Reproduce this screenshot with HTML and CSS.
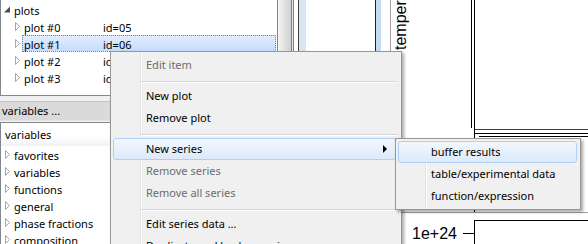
FILE: index.html
```html
<!DOCTYPE html>
<html lang="en">
<head>
    <meta charset="UTF-8">
    <title>Plots</title>
    <link rel="stylesheet" href="styles.css">
</head>
<body>
    <div class="app">
        <div class="left">
            <div class="tree plots">
                <div class="row level0">
                    <svg class="toggle" width="7" height="9"><polygon points="6,1.5 6,7.5 0,7.5" fill="#4d4d4d"/></svg>
                    <div class="cell"><span class="name">plots</span></div>
                </div>
                <div class="row level1">
                    <svg class="toggle" width="7" height="9"><polygon points="1.5,0.5 5.5,4.5 1.5,8.5" fill="#fff" stroke="#a6a6a6"/></svg>
                    <div class="cell"><span class="name">plot #0</span><span>id=05</span></div>
                </div>
                <div class="row level1">
                    <svg class="toggle" width="7" height="9"><polygon points="1.5,0.5 5.5,4.5 1.5,8.5" fill="#fff" stroke="#a6a6a6"/></svg>
                    <div class="cell selected"><span class="name">plot #1</span><span>id=06</span></div>
                </div>
                <div class="row level1">
                    <svg class="toggle" width="7" height="9"><polygon points="1.5,0.5 5.5,4.5 1.5,8.5" fill="#fff" stroke="#a6a6a6"/></svg>
                    <div class="cell"><span class="name">plot #2</span><span>id=07</span></div>
                </div>
                <div class="row level1">
                    <svg class="toggle" width="7" height="9"><polygon points="1.5,0.5 5.5,4.5 1.5,8.5" fill="#fff" stroke="#a6a6a6"/></svg>
                    <div class="cell"><span class="name">plot #3</span><span>id=08</span></div>
                </div>
            </div>

            <div class="dock-title">variables ...</div>

            <div class="tree vars">
                <div class="col-head">variables</div>
                <div class="row level0">
                    <svg class="toggle" width="7" height="9"><polygon points="1.5,0.5 5.5,4.5 1.5,8.5" fill="#fff" stroke="#a6a6a6"/></svg>
                    <div class="cell">favorites</div>
                </div>
                <div class="row level0">
                    <svg class="toggle" width="7" height="9"><polygon points="1.5,0.5 5.5,4.5 1.5,8.5" fill="#fff" stroke="#a6a6a6"/></svg>
                    <div class="cell">variables</div>
                </div>
                <div class="row level0">
                    <svg class="toggle" width="7" height="9"><polygon points="1.5,0.5 5.5,4.5 1.5,8.5" fill="#fff" stroke="#a6a6a6"/></svg>
                    <div class="cell">functions</div>
                </div>
                <div class="row level0">
                    <svg class="toggle" width="7" height="9"><polygon points="1.5,0.5 5.5,4.5 1.5,8.5" fill="#fff" stroke="#a6a6a6"/></svg>
                    <div class="cell">general</div>
                </div>
                <div class="row level0">
                    <svg class="toggle" width="7" height="9"><polygon points="1.5,0.5 5.5,4.5 1.5,8.5" fill="#fff" stroke="#a6a6a6"/></svg>
                    <div class="cell">phase fractions</div>
                </div>
                <div class="row level0">
                    <svg class="toggle" width="7" height="9"><polygon points="1.5,0.5 5.5,4.5 1.5,8.5" fill="#fff" stroke="#a6a6a6"/></svg>
                    <div class="cell">composition</div>
                </div>
            </div>
        </div>

        <div class="strip"></div>

        <svg class="chart" width="197" height="244" viewBox="0 0 197 244">
            <text class="axis-title" transform="translate(15 50) rotate(-90)">temperature [K]</text>
            <line x1="80.5" y1="0" x2="80.5" y2="128" stroke="#000"/>
            <line x1="83.5" y1="0" x2="83.5" y2="212" stroke="#000"/>
            <line x1="83.5" y1="220" x2="83.5" y2="244" stroke="#000"/>
            <line x1="84" y1="129.5" x2="197" y2="129.5" stroke="#e00000"/>
            <line x1="83" y1="133.5" x2="197" y2="133.5" stroke="#000"/>
            <line x1="88" y1="136.5" x2="197" y2="136.5" stroke="#000"/>
            <line x1="9" y1="212.5" x2="197" y2="212.5" stroke="#a0a0a0"/>
            <line x1="9.5" y1="212" x2="9.5" y2="244" stroke="#a0a0a0"/>
            <line x1="83" y1="220.5" x2="197" y2="220.5" stroke="#000"/>
            <line x1="72" y1="233.5" x2="83" y2="233.5" stroke="#000"/>
            <text class="tick-label" x="21" y="239">1e+24</text>
        </svg>

        <div class="menu main-menu">
            <div class="item disabled">Edit item</div>
            <div class="sep"></div>
            <div class="item">New plot</div>
            <div class="item">Remove plot</div>
            <div class="sep"></div>
            <div class="item active">New series<span class="arrow"></span></div>
            <div class="item disabled">Remove series</div>
            <div class="item disabled">Remove all series</div>
            <div class="sep"></div>
            <div class="item">Edit series data ...</div>
            <div class="item">Duplicate and backup series</div>
        </div>

        <div class="menu sub-menu">
            <div class="item active">buffer results</div>
            <div class="item">table/experimental data</div>
            <div class="item">function/expression</div>
        </div>
    </div>
</body>
</html>
```

FILE: styles.css
```css
body {
    margin: 0;
    background-color: #f0f0f0;
    font-family: "Noto Sans", sans-serif;
    font-size: 11px;
    color: #000;
}
.app {
    position: relative;
    display: flex;
    width: 588px;
    height: 244px;
    overflow: hidden;
}
.left {
    width: 278px;
    flex: none;
    display: flex;
    flex-direction: column;
}
.tree {
    background-color: #fff;
    border: 1px solid #828790;
    border-top: none;
}
.plots {
    flex: none;
    height: 96px;
    box-sizing: border-box;
    padding-top: 1px;
}
.dock-title {
    flex: none;
    margin-top: 5px;
    height: 20px;
    box-sizing: border-box;
    padding-left: 2px;
    line-height: 18px;
    background-color: #dadada;
    border-top: 1px solid #c6c6c6;
    border-bottom: 1px solid #e4e4e4;
}
.vars {
    flex: 1;
    min-height: 0;
    overflow: hidden;
    margin-top: 1px;
    border-top: 1px solid #828790;
    border-bottom: none;
}
.col-head {
    height: 23px;
    line-height: 23px;
    padding-left: 4px;
    background: linear-gradient(#fff, #fff 55%, #f1f2f4);
}
.row {
    display: flex;
    align-items: center;
    height: 17px;
}
.level0 {
    padding-left: 3px;
}
.level1 {
    padding-left: 13px;
}
.toggle {
    flex: none;
    margin-right: 1px;
}
.cell {
    flex: 1;
    display: flex;
    align-items: center;
    height: 17px;
    box-sizing: border-box;
    padding-left: 1px;
    padding-top: 1px;
    border: 1px solid transparent;
    white-space: nowrap;
}
.cell .name {
    width: 79px;
}
.cell.selected {
    margin-right: 1px;
    border: 1px dotted #b8742c;
    background: linear-gradient(#e3eefd, #c4dcfc);
}
.strip {
    width: 113px;
    flex: none;
    background: linear-gradient(to right,
        #f5f5f5 0, #d0d0d0 13px,
        #7d7d7d 13px, #7d7d7d 14px,
        #e8e8e8 14px, #e8e8e8 15px,
        #7d7d7d 15px, #7d7d7d 16px,
        #fff 16px, #fff 20px,
        #404040 20px, #404040 21px,
        #dae5f2 21px, #dae5f2 28px,
        #fff 28px, #fff 97px,
        #1e1e1e 97px, #1e1e1e 98px,
        #c6daf1 98px, #c6daf1 103px,
        #fff 103px, #fff 112px,
        #a0a0a0 112px, #a0a0a0 113px);
}
.chart {
    flex: none;
    background-color: #fff;
}
.axis-title,
.tick-label {
    font-family: "Liberation Sans", sans-serif;
    font-size: 16px;
    fill: #000;
}
.menu {
    position: absolute;
    border: 1px solid #979797;
    padding: 2px 5px 2px 2px;
    background: linear-gradient(to right, transparent 29px, #e2e3e3 29px, #e2e3e3 30px, #fff 30px, #fff 31px, transparent 31px) #f0f0f0;
    box-shadow: 2px 2px 3px rgba(0, 0, 0, 0.35);
}
.main-menu {
    left: 110px;
    top: 51px;
    width: 283px;
}
.sub-menu {
    left: 395px;
    top: 138px;
    width: 179px;
    padding-right: 3px;
}
.item {
    display: flex;
    align-items: center;
    height: 22px;
    box-sizing: border-box;
    padding-left: 32px;
    padding-bottom: 1px;
    border: 1px solid transparent;
    border-radius: 3px;
    white-space: nowrap;
}
.item.disabled {
    color: #6d6d6d;
}
.item.active {
    border-color: #aecff7;
    background: linear-gradient(#f2f7fe, #dde9fa);
}
.arrow {
    margin-left: auto;
    margin-right: 8px;
    width: 0;
    height: 0;
    border-left: 4px solid #000;
    border-top: 4px solid transparent;
    border-bottom: 4px solid transparent;
}
.sep {
    height: 9px;
    margin-left: 28px;
    margin-right: -2px;
    background: linear-gradient(transparent 5px, #d7d7d7 5px, #d7d7d7 6px, #fff 6px, #fff 7px, transparent 7px);
}
```
